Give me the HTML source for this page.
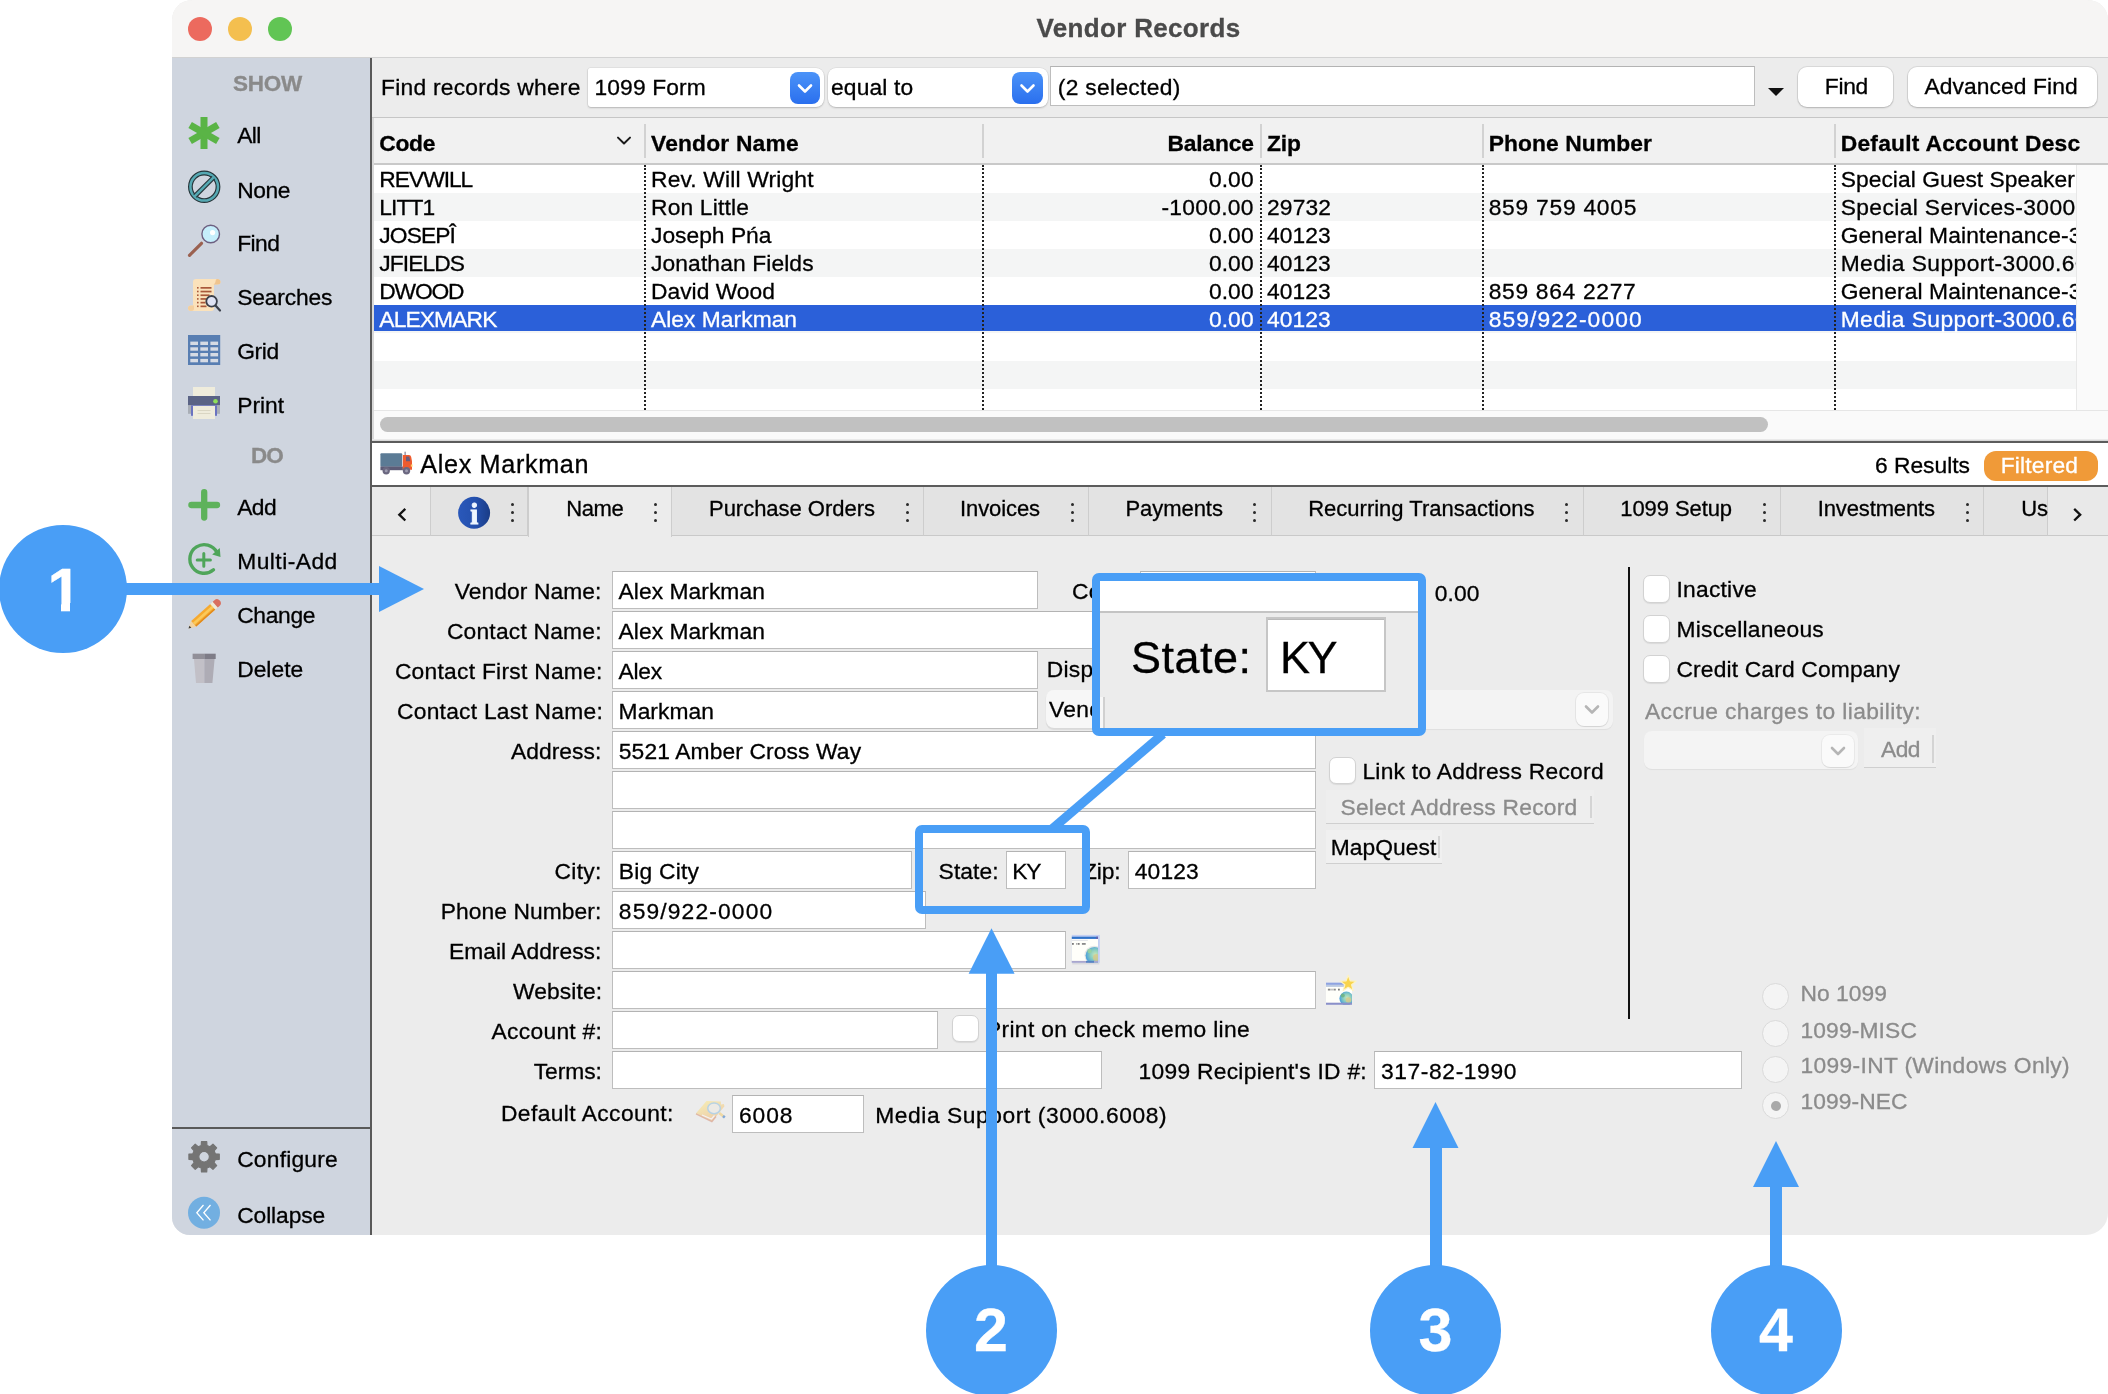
<!DOCTYPE html>
<html><head><meta charset="utf-8"><title>Vendor Records</title>
<style>
html,body{margin:0;padding:0;background:#fff;}
body{width:2108px;height:1394px;position:relative;overflow:hidden;font-family:"Liberation Sans",sans-serif;color:#000;}
div,span.t,svg{position:absolute;box-sizing:border-box;}
span.t{white-space:pre;line-height:1;-webkit-text-stroke:0.3px;}
.inp{background:#fff;border:1px solid #bdbdbd;border-top-color:#b3b3b3;}
.cb{background:#fff;border:1px solid #d2d2d2;border-radius:7px;box-shadow:0 1px 1px rgba(0,0,0,.08);}
.rb{background:#f4f4f4;border:1px solid #dadada;border-radius:50%;}
.btn{background:#fff;border-radius:9px;box-shadow:0 0 0 1px rgba(0,0,0,.08),0 1px 2px rgba(0,0,0,.18);}
#root{left:0;top:0;width:2108px;height:1394px;will-change:transform;}
</style></head><body><div id="root">
<div style="left:172px;top:0px;width:1936px;height:1234.5px;background:#ececec;border-radius:20px 20px 22px 18px;overflow:hidden;"></div>
<div style="left:172px;top:0px;width:1936px;height:58px;background:#f6f5f4;border-bottom:1px solid #d2d2d2;border-radius:20px 20px 0 0;"></div>
<div style="left:188px;top:17px;width:24px;height:24px;background:#ec6a5e;border-radius:50%;"></div>
<div style="left:228px;top:17px;width:24px;height:24px;background:#f4bf4f;border-radius:50%;"></div>
<div style="left:268px;top:17px;width:24px;height:24px;background:#61c554;border-radius:50%;"></div>
<span class="t" style="left:1036.50px;top:14.73px;font-size:26px;letter-spacing:0.329px;font-weight:bold;color:#4a4a4a;">Vendor Records</span>
<div style="left:172px;top:58px;width:199px;height:1176.5px;background:#cfd5df;border-radius:0 0 0 18px;"></div>
<div style="left:370px;top:58px;width:2px;height:1176.5px;background:#595959;"></div>
<div style="left:172px;top:1126.5px;width:198px;height:2px;background:#595959;"></div>
<span class="t" style="left:233.00px;top:72.59px;font-size:22.5px;letter-spacing:-0.249px;font-weight:bold;color:#8a8a8a;">SHOW</span>
<span class="t" style="left:251.00px;top:444.59px;font-size:22.5px;letter-spacing:-0.875px;font-weight:bold;color:#8a8a8a;">DO</span>
<span class="t" style="left:237.20px;top:124.44px;font-size:22.8px;letter-spacing:-0.580px;">All</span>
<span class="t" style="left:237.20px;top:178.94px;font-size:22.8px;letter-spacing:-0.427px;">None</span>
<span class="t" style="left:237.20px;top:232.44px;font-size:22.8px;letter-spacing:-0.564px;">Find</span>
<span class="t" style="left:237.20px;top:286.44px;font-size:22.8px;letter-spacing:-0.141px;">Searches</span>
<span class="t" style="left:237.20px;top:340.44px;font-size:22.8px;letter-spacing:-0.319px;">Grid</span>
<span class="t" style="left:237.20px;top:394.44px;font-size:22.8px;letter-spacing:-0.016px;">Print</span>
<span class="t" style="left:237.20px;top:496.44px;font-size:22.8px;letter-spacing:-0.590px;">Add</span>
<span class="t" style="left:237.20px;top:550.44px;font-size:22.8px;letter-spacing:0.477px;">Multi-Add</span>
<span class="t" style="left:237.20px;top:604.44px;font-size:22.8px;letter-spacing:-0.312px;">Change</span>
<span class="t" style="left:237.20px;top:658.44px;font-size:22.8px;letter-spacing:0.015px;">Delete</span>
<span class="t" style="left:237.20px;top:1148.44px;font-size:22.8px;letter-spacing:0.215px;">Configure</span>
<span class="t" style="left:237.20px;top:1204.44px;font-size:22.8px;letter-spacing:-0.090px;">Collapse</span>
<div style="left:372px;top:58px;width:1736px;height:60px;background:#ececec;border-bottom:1px solid #c6c6c6;"></div>
<span class="t" style="left:381.00px;top:76.44px;font-size:22.8px;letter-spacing:0.247px;">Find records where</span>
<div style="left:588px;top:67.7px;width:235.5px;height:39px;background:#fff;border-radius:2px 8px 8px 3px;box-shadow:0 1px 2px rgba(0,0,0,.2),0 0 0 0.5px rgba(0,0,0,.08);"></div>
<div style="left:790px;top:71.5px;width:30px;height:32px;background:linear-gradient(#4b93f8,#2a6fee);border-radius:8px;"></div>
<svg style="left:790px;top:71.5px" width="30" height="32" viewBox="0 0 30 32"><path d="M9 13.5 L15 19.5 L21 13.5" fill="none" stroke="#fff" stroke-width="2.6" stroke-linecap="round" stroke-linejoin="round"/></svg>
<span class="t" style="left:594.50px;top:76.44px;font-size:22.8px;letter-spacing:0.116px;">1099 Form</span>
<div style="left:828px;top:67.7px;width:220px;height:39px;background:#fff;border-radius:8px;box-shadow:0 1px 2px rgba(0,0,0,.2),0 0 0 0.5px rgba(0,0,0,.08);"></div>
<div style="left:1012.3px;top:71.5px;width:31px;height:32px;background:linear-gradient(#4b93f8,#2a6fee);border-radius:8px;"></div>
<svg style="left:1012.3px;top:71.5px" width="31" height="32" viewBox="0 0 31 32"><path d="M9.5 13.5 L15.5 19.5 L21.5 13.5" fill="none" stroke="#fff" stroke-width="2.6" stroke-linecap="round" stroke-linejoin="round"/></svg>
<span class="t" style="left:831.00px;top:76.44px;font-size:22.8px;letter-spacing:0.145px;">equal to</span>
<div class="inp" style="left:1050px;top:66px;width:705px;height:40px;"></div>
<span class="t" style="left:1057.80px;top:76.44px;font-size:22.8px;letter-spacing:0.306px;">(2 selected)</span>
<svg style="left:1766px;top:86px" width="20" height="12" viewBox="0 0 20 12"><path d="M2 2 L18 2 L10 10 Z" fill="#111"/></svg>
<div class="btn" style="left:1798px;top:67px;width:95px;height:40px;"></div>
<span class="t" style="left:1824.80px;top:74.64px;font-size:22.8px;letter-spacing:-0.289px;">Find</span>
<div class="btn" style="left:1908px;top:67px;width:189px;height:40px;"></div>
<span class="t" style="left:1924.40px;top:74.64px;font-size:22.8px;letter-spacing:0.108px;">Advanced Find</span>
<div style="left:372px;top:118px;width:1736px;height:47px;background:#f1f1f1;border-bottom:2px solid #c9c9c9;"></div>
<div style="left:644px;top:124px;width:1.5px;height:34px;background:#d2d2d2;"></div>
<div style="left:982px;top:124px;width:1.5px;height:34px;background:#d2d2d2;"></div>
<div style="left:1260px;top:124px;width:1.5px;height:34px;background:#d2d2d2;"></div>
<div style="left:1482px;top:124px;width:1.5px;height:34px;background:#d2d2d2;"></div>
<div style="left:1834px;top:124px;width:1.5px;height:34px;background:#d2d2d2;"></div>
<span class="t" style="left:379.30px;top:132.44px;font-size:22.8px;letter-spacing:-0.300px;font-weight:bold;">Code</span>
<svg style="left:615px;top:133px" width="18" height="14" viewBox="615 133 18 14"><path d="M618 137.600 L624 143.500 L630 137.600" fill="none" stroke="#1a1a1a" stroke-width="2" stroke-linecap="round" stroke-linejoin="round"/></svg>
<span class="t" style="left:651.00px;top:132.44px;font-size:22.8px;letter-spacing:0.189px;font-weight:bold;">Vendor Name</span>
<span class="t" style="left:1167.40px;top:132.44px;font-size:22.8px;letter-spacing:-0.164px;font-weight:bold;">Balance</span>
<span class="t" style="left:1267.00px;top:132.44px;font-size:22.8px;letter-spacing:-0.096px;font-weight:bold;">Zip</span>
<span class="t" style="left:1488.70px;top:132.44px;font-size:22.8px;letter-spacing:0.104px;font-weight:bold;">Phone Number</span>
<span class="t" style="left:1840.70px;top:132.44px;font-size:22.8px;letter-spacing:0.250px;font-weight:bold;">Default Account Desc</span>
<div style="left:372px;top:165px;width:1736px;height:275px;background:#fff;"></div>
<div style="left:372px;top:193px;width:1704px;height:28px;background:#f4f5f5;"></div>
<div style="left:372px;top:249px;width:1704px;height:28px;background:#f4f5f5;"></div>
<div style="left:372px;top:305px;width:1704px;height:28px;background:#f4f5f5;"></div>
<div style="left:372px;top:361px;width:1704px;height:28px;background:#f4f5f5;"></div>
<div style="left:372px;top:305px;width:1704px;height:26px;background:#2b60d9;"></div>
<span class="t" style="left:379.30px;top:168.44px;font-size:22.8px;letter-spacing:-1.014px;">REVWILL</span>
<span class="t" style="left:651.00px;top:168.44px;font-size:22.8px;letter-spacing:0.166px;">Rev. Will Wright</span>
<span class="t" style="left:1208.90px;top:168.44px;font-size:22.8px;letter-spacing:0.106px;">0.00</span>
<span class="t" style="left:379.30px;top:196.44px;font-size:22.8px;letter-spacing:-0.890px;">LITT1</span>
<span class="t" style="left:651.00px;top:196.44px;font-size:22.8px;letter-spacing:0.168px;">Ron Little</span>
<span class="t" style="left:1161.40px;top:196.44px;font-size:22.8px;letter-spacing:0.286px;">-1000.00</span>
<span class="t" style="left:1267.00px;top:196.44px;font-size:22.8px;letter-spacing:0.139px;">29732</span>
<span class="t" style="left:1488.70px;top:196.44px;font-size:22.8px;letter-spacing:0.752px;">859 759 4005</span>
<span class="t" style="left:379.30px;top:224.44px;font-size:22.8px;letter-spacing:-0.899px;">JOSEPÎ</span>
<span class="t" style="left:651.00px;top:224.44px;font-size:22.8px;letter-spacing:0.007px;">Joseph Pńa</span>
<span class="t" style="left:1208.90px;top:224.44px;font-size:22.8px;letter-spacing:0.106px;">0.00</span>
<span class="t" style="left:1267.00px;top:224.44px;font-size:22.8px;letter-spacing:0.059px;">40123</span>
<span class="t" style="left:379.30px;top:252.44px;font-size:22.8px;letter-spacing:-0.932px;">JFIELDS</span>
<span class="t" style="left:651.00px;top:252.44px;font-size:22.8px;letter-spacing:0.115px;">Jonathan Fields</span>
<span class="t" style="left:1208.90px;top:252.44px;font-size:22.8px;letter-spacing:0.106px;">0.00</span>
<span class="t" style="left:1267.00px;top:252.44px;font-size:22.8px;letter-spacing:0.059px;">40123</span>
<span class="t" style="left:379.30px;top:280.44px;font-size:22.8px;letter-spacing:-1.184px;">DWOOD</span>
<span class="t" style="left:651.00px;top:280.44px;font-size:22.8px;letter-spacing:0.012px;">David Wood</span>
<span class="t" style="left:1208.90px;top:280.44px;font-size:22.8px;letter-spacing:0.106px;">0.00</span>
<span class="t" style="left:1267.00px;top:280.44px;font-size:22.8px;letter-spacing:0.059px;">40123</span>
<span class="t" style="left:1488.70px;top:280.44px;font-size:22.8px;letter-spacing:0.694px;">859 864 2277</span>
<span class="t" style="left:379.30px;top:308.44px;font-size:22.8px;letter-spacing:-0.873px;color:#fff;">ALEXMARK</span>
<span class="t" style="left:651.00px;top:308.44px;font-size:22.8px;letter-spacing:0.032px;color:#fff;">Alex Markman</span>
<span class="t" style="left:1208.90px;top:308.44px;font-size:22.8px;letter-spacing:0.106px;color:#fff;">0.00</span>
<span class="t" style="left:1267.00px;top:308.44px;font-size:22.8px;letter-spacing:0.059px;color:#fff;">40123</span>
<span class="t" style="left:1488.70px;top:308.44px;font-size:22.8px;letter-spacing:1.114px;color:#fff;">859/922-0000</span>
<div style="left:1836px;top:165px;width:240.5px;height:245px;overflow:hidden;">
<span class="t" style="left:4.70px;top:3.44px;font-size:22.8px;letter-spacing:0.047px;">Special Guest Speaker</span>
<span class="t" style="left:4.70px;top:31.44px;font-size:22.8px;letter-spacing:0.383px;">Special Services-3000</span>
<span class="t" style="left:4.70px;top:59.44px;font-size:22.8px;letter-spacing:0.120px;">General Maintenance-3</span>
<span class="t" style="left:4.70px;top:87.44px;font-size:22.8px;letter-spacing:0.434px;">Media Support-3000.60</span>
<span class="t" style="left:4.70px;top:115.44px;font-size:22.8px;letter-spacing:0.120px;">General Maintenance-3</span>
<span class="t" style="left:4.70px;top:143.44px;font-size:22.8px;letter-spacing:0.434px;color:#fff;">Media Support-3000.60</span>
</div>
<div style="left:644px;top:165px;width:0px;height:245px;border-left:2px dotted #222;"></div>
<div style="left:982px;top:165px;width:0px;height:245px;border-left:2px dotted #222;"></div>
<div style="left:1260px;top:165px;width:0px;height:245px;border-left:2px dotted #222;"></div>
<div style="left:1482px;top:165px;width:0px;height:245px;border-left:2px dotted #222;"></div>
<div style="left:1834px;top:165px;width:0px;height:245px;border-left:2px dotted #222;"></div>
<div style="left:2076px;top:165px;width:32px;height:275px;background:#fafafa;border-left:1px solid #e8e8e8;"></div>
<div style="left:372px;top:410px;width:1736px;height:30px;background:#fafafa;border-top:1px solid #e6e6e6;"></div>
<div style="left:380px;top:417px;width:1388px;height:15px;background:#c1c1c1;border-radius:8px;"></div>
<div style="left:372px;top:438.5px;width:1736px;height:2.5px;background:linear-gradient(#f3f3f3,#cfcfcf);"></div>
<div style="left:372px;top:441px;width:1736px;height:2px;background:#5c5c5c;"></div>
<div style="left:372px;top:118px;width:1.5px;height:321px;background:#d9d9d9;"></div>
<div style="left:372px;top:443px;width:1736px;height:42px;background:#fff;"></div>
<div style="left:372px;top:485px;width:1736px;height:2px;background:#5c5c5c;"></div>
<span class="t" style="left:420.30px;top:452.24px;font-size:25.2px;letter-spacing:0.663px;">Alex Markman</span>
<span class="t" style="left:1874.90px;top:454.44px;font-size:22.8px;letter-spacing:0.006px;">6 Results</span>
<div style="left:1983.6px;top:450.5px;width:114.5px;height:30px;background:#f09a38;border-radius:12px;"></div>
<span class="t" style="left:2000.70px;top:454.44px;font-size:22.8px;letter-spacing:0.184px;color:#fff;">Filtered</span>
<div style="left:372px;top:487px;width:1736px;height:49px;background:#e3e3e3;border-bottom:1px solid #c9c9c9;"></div>
<div style="left:372px;top:487px;width:59px;height:49px;background:#e9e9e9;border-right:1px solid #cdcdcd;border-bottom:1px solid #c9c9c9;"></div>
<div style="left:431px;top:487px;width:97px;height:49px;background:#e3e3e3;border-right:1px solid #cdcdcd;border-bottom:1px solid #c9c9c9;"></div>
<div style="left:528px;top:487px;width:144px;height:50px;background:#ececec;border-left:1px solid #cdcdcd;border-right:1px solid #cdcdcd;"></div>
<div style="left:672px;top:487px;width:252px;height:49px;background:#e3e3e3;border-right:1px solid #cdcdcd;border-bottom:1px solid #c9c9c9;"></div>
<div style="left:924px;top:487px;width:165px;height:49px;background:#e3e3e3;border-right:1px solid #cdcdcd;border-bottom:1px solid #c9c9c9;"></div>
<div style="left:1089px;top:487px;width:183px;height:49px;background:#e3e3e3;border-right:1px solid #cdcdcd;border-bottom:1px solid #c9c9c9;"></div>
<div style="left:1272px;top:487px;width:312px;height:49px;background:#e3e3e3;border-right:1px solid #cdcdcd;border-bottom:1px solid #c9c9c9;"></div>
<div style="left:1584px;top:487px;width:197px;height:49px;background:#e3e3e3;border-right:1px solid #cdcdcd;border-bottom:1px solid #c9c9c9;"></div>
<div style="left:1781px;top:487px;width:203px;height:49px;background:#e3e3e3;border-right:1px solid #cdcdcd;border-bottom:1px solid #c9c9c9;"></div>
<div style="left:1984px;top:487px;width:64px;height:49px;background:#e3e3e3;border-right:1px solid #cdcdcd;border-bottom:1px solid #c9c9c9;"></div>
<div style="left:2048px;top:487px;width:60px;height:49px;background:#e9e9e9;border-bottom:1px solid #c9c9c9;"></div>
<svg style="left:394px;top:504px" width="16" height="22" viewBox="394 504 16 22"><path d="M405.300 508.900 L399.300 514.700 L405.300 520.500" fill="none" stroke="#111" stroke-width="2.300"/></svg>
<svg style="left:2068px;top:504px" width="16" height="22" viewBox="2068 504 16 22"><path d="M2074.200 508.900 L2080.200 514.700 L2074.200 520.500" fill="none" stroke="#111" stroke-width="2.300"/></svg>
<span class="t" style="left:566.30px;top:498.44px;font-size:22px;letter-spacing:-0.447px;">Name</span>
<div style="left:653.5px;top:503.29999999999995px;width:3px;height:3px;background:#2a2a2a;border-radius:50%;"></div>
<div style="left:653.5px;top:511.29999999999995px;width:3px;height:3px;background:#2a2a2a;border-radius:50%;"></div>
<div style="left:653.5px;top:519.3px;width:3px;height:3px;background:#2a2a2a;border-radius:50%;"></div>
<span class="t" style="left:709.00px;top:498.44px;font-size:22px;letter-spacing:-0.020px;">Purchase Orders</span>
<div style="left:905.5px;top:503.29999999999995px;width:3px;height:3px;background:#2a2a2a;border-radius:50%;"></div>
<div style="left:905.5px;top:511.29999999999995px;width:3px;height:3px;background:#2a2a2a;border-radius:50%;"></div>
<div style="left:905.5px;top:519.3px;width:3px;height:3px;background:#2a2a2a;border-radius:50%;"></div>
<span class="t" style="left:960.00px;top:498.44px;font-size:22px;letter-spacing:-0.088px;">Invoices</span>
<div style="left:1070.5px;top:503.29999999999995px;width:3px;height:3px;background:#2a2a2a;border-radius:50%;"></div>
<div style="left:1070.5px;top:511.29999999999995px;width:3px;height:3px;background:#2a2a2a;border-radius:50%;"></div>
<div style="left:1070.5px;top:519.3px;width:3px;height:3px;background:#2a2a2a;border-radius:50%;"></div>
<span class="t" style="left:1125.40px;top:498.44px;font-size:22px;letter-spacing:-0.040px;">Payments</span>
<div style="left:1253.1px;top:503.29999999999995px;width:3px;height:3px;background:#2a2a2a;border-radius:50%;"></div>
<div style="left:1253.1px;top:511.29999999999995px;width:3px;height:3px;background:#2a2a2a;border-radius:50%;"></div>
<div style="left:1253.1px;top:519.3px;width:3px;height:3px;background:#2a2a2a;border-radius:50%;"></div>
<span class="t" style="left:1308.20px;top:498.44px;font-size:22px;letter-spacing:0.004px;">Recurring Transactions</span>
<div style="left:1564.7px;top:503.29999999999995px;width:3px;height:3px;background:#2a2a2a;border-radius:50%;"></div>
<div style="left:1564.7px;top:511.29999999999995px;width:3px;height:3px;background:#2a2a2a;border-radius:50%;"></div>
<div style="left:1564.7px;top:519.3px;width:3px;height:3px;background:#2a2a2a;border-radius:50%;"></div>
<span class="t" style="left:1620.30px;top:498.44px;font-size:22px;letter-spacing:-0.085px;">1099 Setup</span>
<div style="left:1762.7px;top:503.29999999999995px;width:3px;height:3px;background:#2a2a2a;border-radius:50%;"></div>
<div style="left:1762.7px;top:511.29999999999995px;width:3px;height:3px;background:#2a2a2a;border-radius:50%;"></div>
<div style="left:1762.7px;top:519.3px;width:3px;height:3px;background:#2a2a2a;border-radius:50%;"></div>
<span class="t" style="left:1817.80px;top:498.44px;font-size:22px;letter-spacing:-0.137px;">Investments</span>
<div style="left:1966.0px;top:503.29999999999995px;width:3px;height:3px;background:#2a2a2a;border-radius:50%;"></div>
<div style="left:1966.0px;top:511.29999999999995px;width:3px;height:3px;background:#2a2a2a;border-radius:50%;"></div>
<div style="left:1966.0px;top:519.3px;width:3px;height:3px;background:#2a2a2a;border-radius:50%;"></div>
<div style="left:510.5px;top:503.29999999999995px;width:3px;height:3px;background:#2a2a2a;border-radius:50%;"></div>
<div style="left:510.5px;top:511.29999999999995px;width:3px;height:3px;background:#2a2a2a;border-radius:50%;"></div>
<div style="left:510.5px;top:519.3px;width:3px;height:3px;background:#2a2a2a;border-radius:50%;"></div>
<div style="left:1984px;top:487px;width:64px;height:48px;overflow:hidden;">
<span class="t" style="left:37.20px;top:11.45px;font-size:22px;letter-spacing:-0.200px;">Us</span>
</div>
<svg style="left:456px;top:494px" width="38" height="38" viewBox="456 494 38 38"><defs><linearGradient id="ig" x1="0" x2="1" y1="0" y2="0"><stop offset="0" stop-color="#2a58ba"/><stop offset="0.55" stop-color="#2450ad"/><stop offset="1" stop-color="#1a3c86"/></linearGradient></defs><circle cx="474.100" cy="512.800" r="16" fill="url(#ig)"/><text x="474.300" y="523.500" font-family="Liberation Serif,serif" font-weight="bold" font-size="29" fill="#eef6ff" stroke="#eef6ff" stroke-width="0.900" text-anchor="middle">i</text></svg>
<span class="t" style="left:454.80px;top:580.44px;font-size:22.8px;letter-spacing:0.079px;">Vendor Name:</span>
<span class="t" style="left:446.90px;top:620.44px;font-size:22.8px;letter-spacing:0.218px;">Contact Name:</span>
<span class="t" style="left:394.90px;top:660.44px;font-size:22.8px;letter-spacing:0.267px;">Contact First Name:</span>
<span class="t" style="left:397.00px;top:700.44px;font-size:22.8px;letter-spacing:0.250px;">Contact Last Name:</span>
<span class="t" style="left:510.90px;top:740.44px;font-size:22.8px;letter-spacing:0.078px;">Address:</span>
<span class="t" style="left:554.60px;top:860.44px;font-size:22.8px;letter-spacing:0.260px;">City:</span>
<span class="t" style="left:440.70px;top:900.44px;font-size:22.8px;letter-spacing:0.077px;">Phone Number:</span>
<span class="t" style="left:449.00px;top:940.44px;font-size:22.8px;letter-spacing:0.024px;">Email Address:</span>
<span class="t" style="left:513.10px;top:980.44px;font-size:22.8px;letter-spacing:0.102px;">Website:</span>
<span class="t" style="left:491.60px;top:1020.44px;font-size:22.8px;letter-spacing:0.287px;">Account #:</span>
<span class="t" style="left:533.70px;top:1060.44px;font-size:22.8px;letter-spacing:-0.050px;">Terms:</span>
<span class="t" style="left:500.90px;top:1102.14px;font-size:22.8px;letter-spacing:0.429px;">Default Account:</span>
<div class="inp" style="left:612px;top:571px;width:426px;height:38px;"></div>
<span class="t" style="left:618.60px;top:580.44px;font-size:22.8px;letter-spacing:0.049px;">Alex Markman</span>
<div class="inp" style="left:612px;top:611px;width:704px;height:38px;"></div>
<span class="t" style="left:618.60px;top:620.44px;font-size:22.8px;letter-spacing:0.049px;">Alex Markman</span>
<div class="inp" style="left:612px;top:651px;width:426px;height:38px;"></div>
<span class="t" style="left:618.60px;top:660.44px;font-size:22.8px;letter-spacing:-0.289px;">Alex</span>
<div class="inp" style="left:612px;top:691px;width:426px;height:38px;"></div>
<span class="t" style="left:618.60px;top:700.44px;font-size:22.8px;letter-spacing:0.054px;">Markman</span>
<div class="inp" style="left:612px;top:731px;width:704px;height:38px;"></div>
<span class="t" style="left:618.80px;top:740.44px;font-size:22.8px;letter-spacing:0.124px;">5521 Amber Cross Way</span>
<div class="inp" style="left:612px;top:771px;width:704px;height:38px;"></div>
<div class="inp" style="left:612px;top:811px;width:704px;height:38px;"></div>
<div class="inp" style="left:612px;top:851px;width:300px;height:38px;"></div>
<span class="t" style="left:618.80px;top:860.44px;font-size:22.8px;letter-spacing:0.231px;">Big City</span>
<span class="t" style="left:938.60px;top:860.44px;font-size:22.8px;letter-spacing:0.088px;">State:</span>
<div class="inp" style="left:1006px;top:851px;width:60px;height:38px;"></div>
<span class="t" style="left:1012.30px;top:860.44px;font-size:22.8px;letter-spacing:-1.258px;">KY</span>
<span class="t" style="left:1083.00px;top:860.44px;font-size:22.8px;letter-spacing:-0.102px;">Zip:</span>
<div class="inp" style="left:1128px;top:851px;width:188px;height:38px;"></div>
<span class="t" style="left:1134.70px;top:860.44px;font-size:22.8px;letter-spacing:0.179px;">40123</span>
<div class="inp" style="left:612px;top:891px;width:314px;height:38px;"></div>
<span class="t" style="left:618.80px;top:900.44px;font-size:22.8px;letter-spacing:1.155px;">859/922-0000</span>
<div class="inp" style="left:612px;top:931px;width:454px;height:38px;"></div>
<div class="inp" style="left:612px;top:971px;width:704px;height:38px;"></div>
<div class="inp" style="left:612px;top:1011px;width:326px;height:38px;"></div>
<div class="inp" style="left:612px;top:1051px;width:490px;height:38px;"></div>
<div class="inp" style="left:732px;top:1095px;width:132px;height:38px;"></div>
<span class="t" style="left:739.00px;top:1104.24px;font-size:22.8px;letter-spacing:0.894px;">6008</span>
<span class="t" style="left:875.20px;top:1104.24px;font-size:22.8px;letter-spacing:0.576px;">Media Support (3000.6008)</span>
<div class="cb" style="left:952px;top:1015px;width:27px;height:27px;"></div>
<span class="t" style="left:986.00px;top:1018.44px;font-size:22.8px;letter-spacing:0.334px;">Print on check memo line</span>
<span class="t" style="left:1138.50px;top:1060.44px;font-size:22.8px;letter-spacing:0.280px;">1099 Recipient's ID #:</span>
<div class="inp" style="left:1374px;top:1051px;width:368px;height:38px;"></div>
<span class="t" style="left:1381.00px;top:1060.44px;font-size:22.8px;letter-spacing:0.608px;">317-82-1990</span>
<span class="t" style="left:1071.90px;top:580.44px;font-size:22.8px;letter-spacing:0.300px;">Code:</span>
<div class="inp" style="left:1140px;top:571px;width:176px;height:38px;"></div>
<span class="t" style="left:1434.70px;top:582.44px;font-size:22.8px;letter-spacing:0.106px;">0.00</span>
<span class="t" style="left:1046.70px;top:658.44px;font-size:22.8px;letter-spacing:0.300px;">Display</span>
<div style="left:1046px;top:690px;width:567px;height:39px;background:#f3f3f3;border-radius:8px;box-shadow:0 1px 1px rgba(0,0,0,.06);"></div>
<div style="left:1046px;top:690px;width:60px;height:38px;background:#f7f7f7;border-radius:8px;box-shadow:0 1px 1px rgba(0,0,0,.12);"></div>
<span class="t" style="left:1049.10px;top:698.44px;font-size:22.8px;letter-spacing:0.300px;">Vendor</span>
<div style="left:1576px;top:693px;width:32px;height:33px;background:#fafafa;border-radius:8px;box-shadow:0 0 0 1px rgba(0,0,0,.05),0 1px 1px rgba(0,0,0,.08);"></div>
<svg style="left:1576px;top:693px" width="32" height="33" viewBox="0 0 32 33"><path d="M10 13.5 L16 19.5 L22 13.5" fill="none" stroke="#b5b5b5" stroke-width="2.6" stroke-linecap="round" stroke-linejoin="round"/></svg>
<div class="cb" style="left:1329px;top:757px;width:27px;height:27px;"></div>
<span class="t" style="left:1362.40px;top:760.44px;font-size:22.8px;letter-spacing:0.262px;">Link to Address Record</span>
<div style="left:1326px;top:790px;width:268px;height:34px;background:#eeeeee;border-bottom:1.5px solid #cfcfcf;"></div>
<div style="left:1590px;top:796px;width:1.5px;height:22px;background:#d4d4d4;"></div>
<span class="t" style="left:1340.50px;top:796.44px;font-size:22.8px;letter-spacing:0.242px;color:#8b8b8b;">Select Address Record</span>
<div style="left:1326px;top:830px;width:116px;height:34px;background:#f0f0f0;border-bottom:1.5px solid #cfcfcf;"></div>
<div style="left:1438px;top:836px;width:1.5px;height:22px;background:#d4d4d4;"></div>
<span class="t" style="left:1330.80px;top:836.44px;font-size:22.8px;letter-spacing:0.052px;">MapQuest</span>
<div style="left:1628px;top:567px;width:2px;height:452px;background:#111;"></div>
<div class="cb" style="left:1642.5px;top:575.3px;width:27.5px;height:27.5px;"></div>
<span class="t" style="left:1676.50px;top:578.44px;font-size:22.8px;letter-spacing:0.240px;">Inactive</span>
<div class="cb" style="left:1642.5px;top:615.3px;width:27.5px;height:27.5px;"></div>
<span class="t" style="left:1676.50px;top:618.44px;font-size:22.8px;letter-spacing:0.233px;">Miscellaneous</span>
<div class="cb" style="left:1642.5px;top:655.3px;width:27.5px;height:27.5px;"></div>
<span class="t" style="left:1676.50px;top:658.44px;font-size:22.8px;letter-spacing:0.158px;">Credit Card Company</span>
<span class="t" style="left:1645.00px;top:700.44px;font-size:22.8px;letter-spacing:0.398px;color:#8b8b8b;">Accrue charges to liability:</span>
<div style="left:1644px;top:731px;width:214px;height:38px;background:#f4f4f4;border-radius:8px;box-shadow:0 1px 1px rgba(0,0,0,.06);"></div>
<div style="left:1822px;top:735px;width:32px;height:32px;background:#fafafa;border-radius:8px;box-shadow:0 0 0 1px rgba(0,0,0,.04),0 1px 1px rgba(0,0,0,.08);"></div>
<svg style="left:1822px;top:735px" width="32" height="32" viewBox="0 0 32 32"><path d="M10 13 L16 19 L22 13" fill="none" stroke="#b5b5b5" stroke-width="2.6" stroke-linecap="round" stroke-linejoin="round"/></svg>
<div style="left:1864px;top:728px;width:72px;height:40px;background:#efefef;border-bottom:1.5px solid #cfcfcf;"></div>
<div style="left:1932px;top:735px;width:1.5px;height:28px;background:#d4d4d4;"></div>
<span class="t" style="left:1881.00px;top:738.44px;font-size:22.8px;letter-spacing:-0.523px;color:#8b8b8b;">Add</span>
<div class="rb" style="left:1762.0px;top:982.5px;width:27px;height:27px;"></div>
<span class="t" style="left:1800.50px;top:982.44px;font-size:22.8px;letter-spacing:0.042px;color:#8b8b8b;">No 1099</span>
<div class="rb" style="left:1762.0px;top:1019.5px;width:27px;height:27px;"></div>
<span class="t" style="left:1800.50px;top:1018.94px;font-size:22.8px;letter-spacing:0.131px;color:#8b8b8b;">1099-MISC</span>
<div class="rb" style="left:1762.0px;top:1055.5px;width:27px;height:27px;"></div>
<span class="t" style="left:1800.50px;top:1054.44px;font-size:22.8px;letter-spacing:0.332px;color:#8b8b8b;">1099-INT (Windows Only)</span>
<div class="rb" style="left:1762.0px;top:1091.5px;width:27px;height:27px;"></div>
<span class="t" style="left:1800.50px;top:1090.44px;font-size:22.8px;letter-spacing:0.068px;color:#8b8b8b;">1099-NEC</span>
<div style="left:1770.5px;top:1100.5px;width:10px;height:10px;background:#a9a9a9;border-radius:50%;"></div>
<div style="left:915px;top:825px;width:175px;height:89.2px;border:8px solid #499ef6;border-radius:7px;"></div>
<svg style="left:1030px;top:720px" width="160" height="120" viewBox="1030 720 160 120"><line x1="1163" y1="734" x2="1052" y2="829" stroke="#499ef6" stroke-width="9"/></svg>
<div style="left:1092px;top:573px;width:334px;height:163px;background:#ececec;border:8px solid #499ef6;border-radius:7px;"></div>
<div style="left:1100px;top:581px;width:318px;height:31.5px;background:#fff;border-bottom:2px solid #c4c4c4;"></div>
<div style="left:1100px;top:697px;width:5px;height:31px;background:#f7f7f7;border-right:2px solid #d0d0d0;"></div>
<span class="t" style="left:1131.00px;top:635.29px;font-size:45px;letter-spacing:0.487px;">State:</span>
<div style="left:1266px;top:617px;width:120px;height:75px;background:#fff;border:2px solid #c6c6c6;box-shadow:inset 0 1px 0 #b9b9b9;"></div>
<span class="t" style="left:1280.00px;top:635.29px;font-size:45px;letter-spacing:-2.516px;">KY</span>
<div style="left:100px;top:583px;width:282px;height:12px;background:#499ef6;"></div>
<svg style="left:378px;top:565px" width="48" height="48" viewBox="378 565 48 48"><path d="M379 566 L424 589 L379 612 Z" fill="#499ef6"/></svg>
<div style="left:-0.8999999999999986px;top:525.1px;width:127.8px;height:127.8px;background:#499ef6;border-radius:50%;"></div>
<span class="t" style="left:47.44px;top:559.75px;font-size:61px;letter-spacing:0.000px;font-weight:bold;color:#fff;">1</span>
<div style="left:44px;top:603.2px;width:17.4px;height:12px;background:#499ef6;"></div>
<div style="left:70.4px;top:603.2px;width:14px;height:12px;background:#499ef6;"></div>
<div style="left:985.5px;top:970px;width:11.8px;height:320px;background:#499ef6;"></div>
<svg style="left:966px;top:927px" width="50" height="50" viewBox="966 927 50 50"><path d="M968.600 973.800 L991.500 928.200 L1014.600 973.800 Z" fill="#499ef6"/></svg>
<div style="left:925.5px;top:1264.5px;width:131.0px;height:131.0px;background:#499ef6;border-radius:50%;"></div>
<span class="t" style="left:974.04px;top:1300.25px;font-size:61px;letter-spacing:0.000px;font-weight:bold;color:#fff;">2</span>
<div style="left:1429.5px;top:1145px;width:12px;height:150px;background:#499ef6;"></div>
<svg style="left:1410px;top:1100px" width="52" height="50" viewBox="1410 1100 52 50"><path d="M1412.5 1148 L1435.5 1102 L1458.5 1148 Z" fill="#499ef6"/></svg>
<div style="left:1370.0px;top:1264.5px;width:131.0px;height:131.0px;background:#499ef6;border-radius:50%;"></div>
<span class="t" style="left:1418.54px;top:1300.25px;font-size:61px;letter-spacing:0.000px;font-weight:bold;color:#fff;">3</span>
<div style="left:1770px;top:1184px;width:12px;height:110px;background:#499ef6;"></div>
<svg style="left:1750px;top:1139px" width="52" height="50" viewBox="1750 1139 52 50"><path d="M1753 1187 L1776 1141 L1799 1187 Z" fill="#499ef6"/></svg>
<div style="left:1710.5px;top:1264.5px;width:131.0px;height:131.0px;background:#499ef6;border-radius:50%;"></div>
<span class="t" style="left:1759.04px;top:1300.25px;font-size:61px;letter-spacing:0.000px;font-weight:bold;color:#fff;">4</span>
<svg style="left:184px;top:113px" width="40" height="40" viewBox="184 113 40 40" ><rect x="200.5" y="117" width="7" height="32" fill="#5ab446" transform="rotate(0 204 133)"/><rect x="200.5" y="117" width="7" height="32" fill="#5ab446" transform="rotate(60 204 133)"/><rect x="200.5" y="117" width="7" height="32" fill="#5ab446" transform="rotate(120 204 133)"/></svg>
<svg style="left:184px;top:167px" width="40" height="40" viewBox="184 167 40 40" ><circle cx="204.2" cy="186.8" r="13.8" fill="none" stroke="#26353a" stroke-width="4.800"/><circle cx="204.2" cy="186.8" r="13.8" fill="none" stroke="#56a9b3" stroke-width="2.500"/><line x1="195" y1="196" x2="213.4" y2="177.6" stroke="#26353a" stroke-width="4.800"/><line x1="194.6" y1="196.4" x2="213.8" y2="177.2" stroke="#56a9b3" stroke-width="2.500"/></svg>
<svg style="left:184px;top:220px" width="40" height="40" viewBox="184 220 40 40" ><line x1="201.5" y1="243.3" x2="189.5" y2="255.3" stroke="#9b6150" stroke-width="3.2" stroke-linecap="round"/><circle cx="210.7" cy="234" r="8.8" fill="#c5eefb" stroke="#6d5f80" stroke-width="1.4"/><circle cx="212.6" cy="232.6" r="2.6" fill="#fff"/></svg>
<svg style="left:184px;top:275px" width="40" height="40" viewBox="184 275 40 40" ><path d="M196 279 h21 q3.5 0 3.5 3 q0 2.5 -3 2.5 h-3.5 v24 q0 2.5 -3 2.5 h-20 q-3 0 -3 -3 q0 -2.5 3 -2.5 h2 v-23.5 q0 -3 3 -3 z" fill="#fbe2bb"/><path d="M217 279 q3.5 0 3.5 3 q0 2.5 -3 2.5 h-4 q2 -1 2 -3 q0 -2.5 1.5 -2.5z" fill="#efc48e"/><path d="M191 305.500 h3 v3 q0 2.500 -3 2.500 q-3 0 -3 -3 q0 -2.500 3 -2.500z" fill="#f3cf9f"/><rect x="197" y="287" width="1.6" height="1.6" fill="#a9583a"/><rect x="200.5" y="287" width="11" height="1.7" fill="#a9583a"/><rect x="197" y="290.7" width="1.6" height="1.6" fill="#a9583a"/><rect x="200.5" y="290.7" width="11" height="1.7" fill="#a9583a"/><rect x="197" y="294.4" width="1.6" height="1.6" fill="#a9583a"/><rect x="200.5" y="294.4" width="9" height="1.7" fill="#a9583a"/><rect x="197" y="298.1" width="1.6" height="1.6" fill="#a9583a"/><rect x="200.5" y="298.1" width="6" height="1.7" fill="#a9583a"/><rect x="197" y="301.8" width="1.6" height="1.6" fill="#a9583a"/><rect x="200.5" y="301.8" width="5" height="1.7" fill="#a9583a"/><rect x="197" y="305.5" width="1.6" height="1.6" fill="#a9583a"/><rect x="200.5" y="305.5" width="6" height="1.7" fill="#a9583a"/><line x1="215.5" y1="305.500" x2="220" y2="310.500" stroke="#3a3f4a" stroke-width="2.2" stroke-linecap="round"/><circle cx="211.600" cy="301.300" r="5.300" fill="#dfe3f4" stroke="#3a3f4a" stroke-width="1.8"/></svg>
<svg style="left:186px;top:333px" width="36" height="34" viewBox="186 333 36 34" ><rect x="188" y="335" width="32.200" height="30" fill="#587eb2"/><rect x="190.3" y="341.6" width="7.7" height="3.4" fill="#d6dbe4"/><rect x="190.3" y="347.3" width="7.7" height="3.4" fill="#d6dbe4"/><rect x="190.3" y="353" width="7.7" height="3.4" fill="#d6dbe4"/><rect x="190.3" y="358.9" width="7.7" height="3.4" fill="#d6dbe4"/><rect x="200.3" y="341.6" width="7.7" height="3.4" fill="#d6dbe4"/><rect x="200.3" y="347.3" width="7.7" height="3.4" fill="#d6dbe4"/><rect x="200.3" y="353" width="7.7" height="3.4" fill="#d6dbe4"/><rect x="200.3" y="358.9" width="7.7" height="3.4" fill="#d6dbe4"/><rect x="210.4" y="341.6" width="7.7" height="3.4" fill="#d6dbe4"/><rect x="210.4" y="347.3" width="7.7" height="3.4" fill="#d6dbe4"/><rect x="210.4" y="353" width="7.7" height="3.4" fill="#d6dbe4"/><rect x="210.4" y="358.9" width="7.7" height="3.4" fill="#d6dbe4"/></svg>
<svg style="left:186px;top:385px" width="36" height="36" viewBox="186 385 36 36" ><rect x="193" y="387" width="22" height="10" fill="#efecdc"/><rect x="188" y="396" width="32" height="9.500" fill="#5a6385"/><rect x="188" y="405.300" width="32" height="8.500" fill="#a9aeb6"/><rect x="191" y="405.300" width="26" height="10.500" fill="#6a73c1"/><rect x="193" y="406" width="22" height="13" fill="#efecdc"/><rect x="197.500" y="410" width="13" height="0.800" fill="#d5d1bd"/><rect x="197.500" y="413" width="13" height="0.800" fill="#d5d1bd"/><circle cx="215.500" cy="401.300" r="2.300" fill="#8fe05a"/></svg>
<svg style="left:186px;top:487px" width="36" height="36" viewBox="186 487 36 36" ><path d="M204.200 492.200 V517.600 M191.400 505 H217" stroke="#5eb25b" stroke-width="6.300" stroke-linecap="round" fill="none"/></svg>
<svg style="left:186px;top:541px" width="38" height="36" viewBox="186 541 38 36" ><g transform="translate(0 0.800)"><path d="M213.5 569 A14.300 14.300 0 1 1 216.800 551.500" fill="none" stroke="#4fa55a" stroke-width="3.400" stroke-linecap="round"/><path d="M212.200 553.800 L220.500 556.200 L219.800 547.200 Z" fill="#4fa55a"/><path d="M203.800 552.800 V565.400 M197.200 559.100 H210.400" stroke="#4fa55a" stroke-width="3" stroke-linecap="round" fill="none"/></g></svg>
<svg style="left:186px;top:597px" width="36" height="34" viewBox="186 597 36 34" ><g transform="translate(188.5 628.400) rotate(-41.700)"><path d="M0 0 L7 -4 V4 Z" fill="#f2d3a0"/><path d="M0 0 L2.500 -1.400 V1.400 Z" fill="#3b3b3b"/><rect x="7" y="-3.800" width="25.500" height="7.600" fill="#f6a92f"/><rect x="7" y="-1.300" width="25.500" height="2.600" fill="#fbc95a"/><rect x="7" y="2.400" width="25.500" height="1.400" fill="#e08a1e"/><rect x="32.500" y="-3.800" width="3.300" height="7.600" fill="#f0ead6"/><path d="M35.800 -3.800 h2.300 a3.800 3.800 0 0 1 0 7.600 h-2.300z" fill="#d96f5f"/></g></svg>
<svg style="left:190px;top:651px" width="30" height="34" viewBox="190 651 30 34" ><path d="M194 659 H204.300 V682.900 H196 Z" fill="#c2c0c7"/><path d="M204.300 659 H214.600 L212.400 682.900 H204.300 Z" fill="#aeacb5"/><rect x="192.600" y="653.700" width="11.700" height="5.300" fill="#918f98"/><rect x="204.300" y="653.700" width="11.400" height="5.300" fill="#7e7c87"/></svg>
<svg style="left:186px;top:1139px" width="36" height="36" viewBox="186 1139 36 36" ><path d="M201.23 1145.46 L201.49 1141.52 L206.71 1141.52 L206.97 1145.46 L210.02 1146.72 L212.99 1144.13 L216.67 1147.81 L214.08 1150.78 L215.34 1153.83 L219.28 1154.09 L219.28 1159.31 L215.34 1159.57 L214.08 1162.62 L216.67 1165.59 L212.99 1169.27 L210.02 1166.68 L206.97 1167.94 L206.71 1171.88 L201.49 1171.88 L201.23 1167.94 L198.18 1166.68 L195.21 1169.27 L191.53 1165.59 L194.12 1162.62 L192.86 1159.57 L188.92 1159.31 L188.92 1154.09 L192.86 1153.83 L194.12 1150.78 L191.53 1147.81 L195.21 1144.13 L198.18 1146.72Z M198.79999999999998 1156.7 a5.3 5.3 0 1 0 10.6 0 a5.3 5.3 0 1 0 -10.6 0Z" fill="#747474" fill-rule="evenodd" stroke="#747474" stroke-width="1.2" stroke-linejoin="round"/></svg>
<svg style="left:186px;top:1195px" width="36" height="36" viewBox="186 1195 36 36" ><circle cx="204" cy="1212.700" r="16" fill="#72afe1"/><path d="M203.500 1205 L196.800 1212.700 L203.500 1220.400 M210.500 1205 L203.800 1212.700 L210.500 1220.400" fill="none" stroke="#fff" stroke-width="1.300"/></svg>
<svg style="left:378px;top:449px" width="38" height="28" viewBox="378 449 38 28" ><rect x="380.400" y="453.300" width="21.800" height="13.400" rx="1" fill="#5b7b95"/><rect x="380.400" y="466.500" width="22.500" height="3.700" fill="#5d5b76"/><rect x="404.600" y="451.700" width="1" height="4" fill="#6b6880"/><path d="M402.800 455 H409 Q410.800 455 411.200 457 L412 461.500 V469.800 H402.800 Z" fill="#ef5b2e"/><path d="M406 456.500 H409.300 L410.300 461.300 H406 Z" fill="#6c5b79"/><rect x="410.800" y="464.500" width="1.700" height="2.200" fill="#ffd36b"/><circle cx="386.200" cy="470.800" r="3.700" fill="#6b6880"/><circle cx="386.200" cy="470.800" r="1.500" fill="#9d9bb0"/><circle cx="406.500" cy="470.800" r="3.700" fill="#6b6880"/><circle cx="406.500" cy="470.800" r="1.500" fill="#9d9bb0"/></svg>
<svg style="left:1070px;top:933px" width="32" height="34" viewBox="1070 933 32 34" ><defs><clipPath id="ce"><rect x="1071.800" y="938.800" width="26.200" height="23.900"/></clipPath><radialGradient id="gl" cx="55%" cy="45%" r="60%"><stop offset="0" stop-color="#c9e6b8"/><stop offset="0.450" stop-color="#8ccfc0"/><stop offset="1" stop-color="#3d97df"/></radialGradient></defs><rect x="1072.300" y="962" width="27" height="2.500" fill="#d9d9de"/><rect x="1071.800" y="934.900" width="28" height="27.800" fill="#c3cff3"/><rect x="1071.800" y="938.800" width="26.200" height="22.200" fill="#fffffa"/><rect x="1071.800" y="936.700" width="26.200" height="2.200" fill="#2f73c9"/><rect x="1096.200" y="936.700" width="1.800" height="2.200" fill="#6a5fae"/><rect x="1071.800" y="939.800" width="16" height="1.200" fill="#e4e6ea"/><rect x="1072" y="943" width="1.800" height="1.800" fill="#7a7a7a"/><rect x="1076" y="943" width="1.400" height="1.800" fill="#b0b0b0"/><rect x="1077.800" y="943" width="1.800" height="1.800" fill="#7a7a7a"/><rect x="1081.900" y="943" width="3.800" height="1.800" fill="#8a8a8a"/><g clip-path="url(#ce)"><circle cx="1094" cy="955.300" r="9.600" fill="#e6e8e6"/><circle cx="1094.300" cy="955.600" r="8.700" fill="url(#gl)"/><circle cx="1096.500" cy="957.500" r="3.500" fill="#d7c98a" opacity="0.800"/><circle cx="1089.500" cy="951" r="2.200" fill="#9ed59a" opacity="0.800"/></g><rect x="1071.800" y="960.900" width="26.200" height="1.800" fill="#a9a5cd"/><rect x="1086" y="960.900" width="8" height="1.800" fill="#5583c4"/></svg>
<svg style="left:1322px;top:972px" width="36" height="36" viewBox="1322 972 36 36" ><defs><clipPath id="cw"><rect x="1326" y="986.900" width="26" height="17.900"/></clipPath></defs><rect x="1326" y="982.600" width="26" height="22.200" fill="#fffffa"/><rect x="1326" y="982.600" width="26" height="2.300" fill="#8ea3e1"/><rect x="1326" y="984.900" width="26" height="2" fill="#bccae2"/><rect x="1327.900" y="988.700" width="2.100" height="1.800" fill="#8a8a8a"/><rect x="1330" y="988.700" width="3.500" height="1.800" fill="#c4c4c4"/><rect x="1333.700" y="988.700" width="2.100" height="1.800" fill="#8a8a8a"/><rect x="1338" y="988.700" width="1.800" height="1.800" fill="#7a7a7a"/><g clip-path="url(#cw)"><circle cx="1346.400" cy="998.600" r="7" fill="url(#gl)"/><circle cx="1348.500" cy="1000" r="2.800" fill="#d7c98a" opacity="0.800"/><circle cx="1342.800" cy="995.500" r="2" fill="#6fb27a" opacity="0.800"/></g><rect x="1326" y="1002.700" width="26" height="2.100" fill="#8a90c9"/><path d="M1348.200 975.200 L1350.300 980.800 L1356.200 981.100 L1351.600 984.800 L1353.200 990.500 L1348.200 987.300 L1343.200 990.500 L1344.800 984.800 L1340.200 981.100 L1346.100 980.800 Z" fill="#f8d44c" stroke="#fdf3c4" stroke-width="1.200" stroke-linejoin="round"/></svg>
<svg style="left:693px;top:1098px" width="36" height="28" viewBox="693 1098 36 28" ><defs><linearGradient id="fo" x1="0" y1="0" x2="0.600" y2="1"><stop offset="0" stop-color="#f8efb0"/><stop offset="1" stop-color="#ecc9a2"/></linearGradient></defs><path d="M706.500 1101.100 L720.900 1101.500 L721 1104.500 L723.800 1104 L724.500 1106.200 L711.900 1121.600 L695.800 1113.500 Z" fill="url(#fo)" opacity="0.900"/><path d="M696 1113.800 L711.900 1121.600 L716 1116.500" fill="none" stroke="#dcae9e" stroke-width="1.300" opacity="0.850"/><path d="M702 1115 L711.500 1119 L714.500 1115.500" fill="none" stroke="#f4f0f4" stroke-width="1.200"/><line x1="719.200" y1="1113" x2="724.200" y2="1117" stroke="#f0d9a4" stroke-width="2.600"/><line x1="723" y1="1116" x2="724.800" y2="1117.500" stroke="#7fa8da" stroke-width="2.600"/><ellipse cx="714.050" cy="1108.300" rx="6.300" ry="5.400" fill="#ecebe8" stroke="#b4d2e8" stroke-width="1.500" opacity="0.950"/></svg>
</div></body></html>
